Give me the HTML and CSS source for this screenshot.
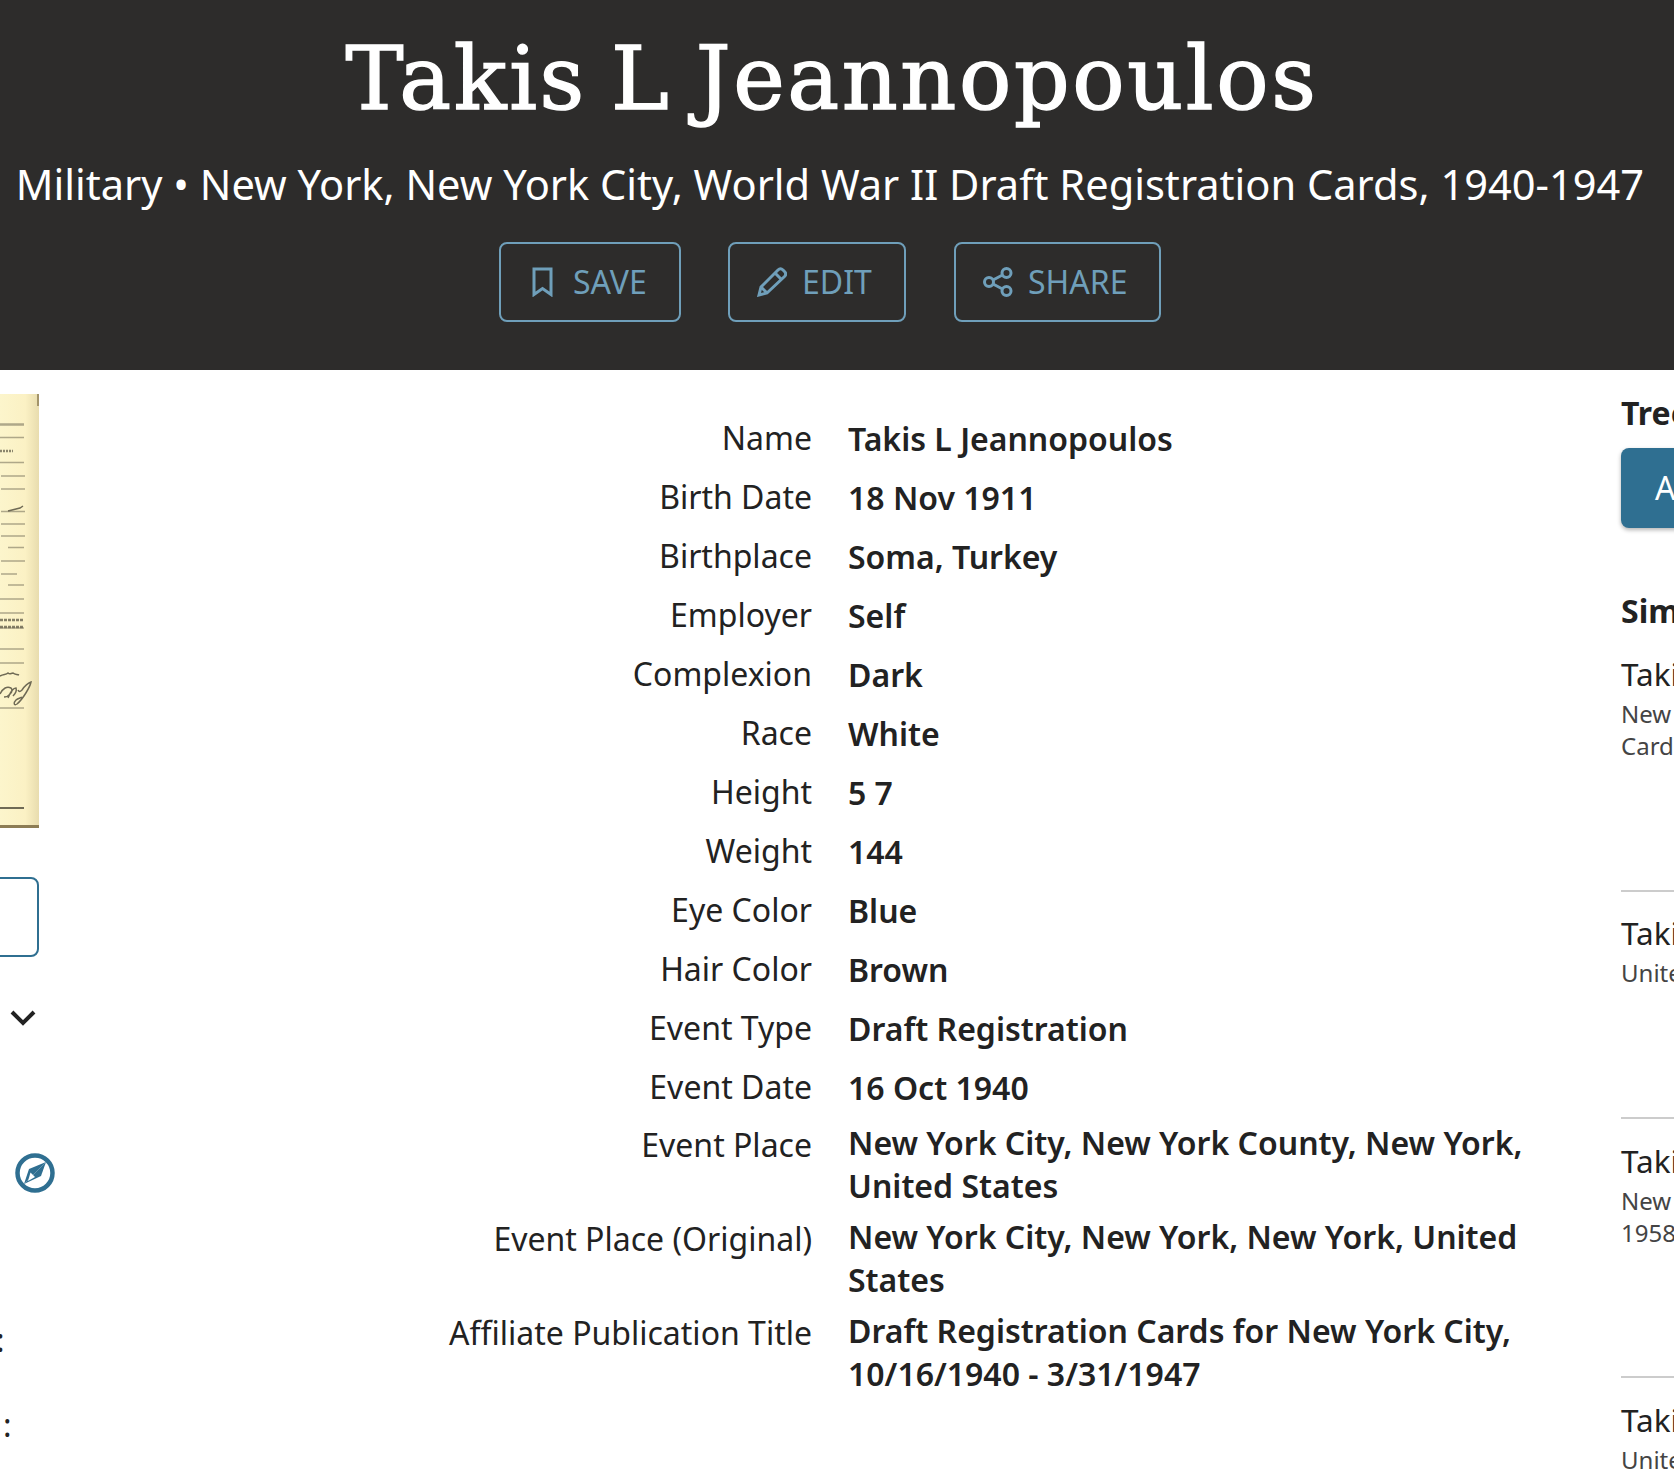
FILE: index.html
```html
<!DOCTYPE html>
<html lang="en">
<head>
<meta charset="utf-8">
<title>Takis L Jeannopoulos</title>
<link rel="stylesheet" href="styles.css">
</head>
<body>
<header class="hero">
  <h1 class="hero-title">Takis L Jeannopoulos</h1>
  <p class="hero-sub">Military • New York, New York City, World War II Draft Registration Cards, 1940-1947</p>
  <div class="hero-actions">
    <a class="ghost-btn save">
      <svg class="ico-save" viewBox="0 0 21 30"><path d="M2 2h17v25.500l-8.500-6-8.500 6z"/></svg>
      <span>SAVE</span>
    </a>
    <a class="ghost-btn edit">
      <svg class="ico-edit" viewBox="0 0 30 30"><path d="M2 28l2-8L21 3c1.500-1.500 3.500-1.500 5 0l1.500 1.500c1.500 1.500 1.500 3.500 0 5L10 26z"/><path d="M4 20l6 6M18 6l6 6"/></svg>
      <span>EDIT</span>
    </a>
    <a class="ghost-btn share">
      <svg class="ico-share" viewBox="0 0 30 30"><circle cx="6" cy="15" r="4.500"/><circle cx="23.500" cy="6" r="4.500"/><circle cx="23.500" cy="24" r="4.500"/><path d="M10 13l9.500-5M10 17l9.500 5"/></svg>
      <span>SHARE</span>
    </a>
  </div>
</header>

<main class="record">
  <div class="media">
    <div class="scan">
      <svg viewBox="0 0 39 434" width="39" height="434">
        <defs>
          <linearGradient id="paper" x1="0" x2="1" y1="0" y2="0">
            <stop offset="0" stop-color="#fcf5cc"/>
            <stop offset="0.65" stop-color="#fbf1c4"/>
            <stop offset="1" stop-color="#e8dcae"/>
          </linearGradient>
        </defs>
        <rect width="39" height="434" fill="url(#paper)"/>
        <rect x="37" width="2" height="12" fill="#a3946a"/>
        <rect y="431" width="39" height="3" fill="#8d7d55"/>
        <g class="scan-lines">
          <path d="M0 30.500h24" stroke-width="2.500" opacity=".55"/>
          <path d="M0 43.500h24M0 68.500h24M1 82h24M1 95h24M1 117.500h24M1 130h24M1 142h24M8 153.500h16M1 167h24M1 180h16M8 191h16M0 205h24M0 219h24M0 234h24M0 255h24M0 269h24M0 314h24" opacity=".55"/>
          <path d="M0 57h13" stroke-dasharray="2 1" stroke-width="2.500" opacity=".8"/>
          <path d="M0 226h24M0 233h24" stroke-dasharray="3 1" stroke-width="2.500" opacity=".85"/>
          <path d="M8 117l12-3 3-2" stroke-width="1.500"/>
          <path d="M0 282c4-2 6-1 8-3 2 2 3 0 5 0 2 2 4 1 6 2M0 300c3-6 7-8 11-6 3 3-2 9-7 9M8 304c2-5 5-10 8-10 1 3-1 6-3 8M18 296c1 2 2 2 4 0 2-3 6-7 9-8-1 5-8 17-14 22-3 2-4-1-1-4 2-2 5-2 6-3" stroke-width="1.500"/>
          <path d="M0 414h24" stroke-width="2"/>
        </g>
      </svg>
    </div>
    <div class="media-btn"></div>
    <svg class="chevron" viewBox="0 0 26 16"><path d="M2 2l11 11L24 2"/></svg>
    <svg class="compass" viewBox="0 0 40 40"><circle cx="20" cy="20" r="17.500"/><path class="needle" d="M31 9L9 31l5-15z"/><path class="needle" d="M31 9L9 31l17-8z"/><path class="needle-hole" d="M15.500 19.500l4.500 4.500-7 4z"/></svg>
    <span class="stub stub-a">:</span>
    <span class="stub stub-b">:</span>
  </div>

  <dl class="facts">
    <dt>Name</dt><dd>Takis L Jeannopoulos</dd>
    <dt>Birth Date</dt><dd>18 Nov 1911</dd>
    <dt>Birthplace</dt><dd>Soma, Turkey</dd>
    <dt>Employer</dt><dd>Self</dd>
    <dt>Complexion</dt><dd>Dark</dd>
    <dt>Race</dt><dd>White</dd>
    <dt>Height</dt><dd>5 7</dd>
    <dt>Weight</dt><dd>144</dd>
    <dt>Eye Color</dt><dd>Blue</dd>
    <dt>Hair Color</dt><dd>Brown</dd>
    <dt>Event Type</dt><dd>Draft Registration</dd>
    <dt>Event Date</dt><dd>16 Oct 1940</dd>
    <dt class="tall">Event Place</dt><dd>New York City, New York County, New York, United States</dd>
    <dt class="tall">Event Place (Original)</dt><dd>New York City, New York, New York, United States</dd>
    <dt class="tall">Affiliate Publication Title</dt><dd>Draft Registration Cards for New York City, 10/16/1940 - 3/31/1947</dd>
  </dl>

  <aside class="side">
    <h2 class="side-head">Tree Person</h2>
    <a class="attach">Attach to Family Tree</a>
    <h2 class="side-head similar">Similar Records</h2>
    <article class="hit first">
      <h3>Takis L Jeannopoulos</h3>
      <p>New York, New York City, World War II Draft Registration</p>
      <p>Cards, 1940-1947</p>
    </article>
    <article class="hit single">
      <h3>Takis Jeannopoulos</h3>
      <p>United States Census</p>
    </article>
    <article class="hit third">
      <h3>Takis Jeannopoulos</h3>
      <p>New York, New York Passenger and Crew Lists, 1909, 1925-</p>
      <p>1958</p>
    </article>
    <article class="hit last">
      <h3>Takis Jeannopoulos</h3>
      <p>United States Census</p>
    </article>
  </aside>
</main>
</body>
</html>
```
FILE: styles.css
```css
* { box-sizing: border-box; }
html, body { margin: 0; height: 1482px; overflow: hidden; background: #fff; }
body { font-family: "Noto Sans", sans-serif; color: #222; }

.hero {
  height: 370px;
  background: #2d2c2b;
  padding: 0 14px 0 0;
  color: #fff;
  text-align: center;
}
.hero-title {
  margin: 0;
  padding: 23px 0 0 4px;
  font-family: "DejaVu Serif", serif;
  font-weight: 400;
  font-size: 87px;
  line-height: 112px;
  letter-spacing: 2.6px;
  word-spacing: -6px;
  -webkit-text-stroke: 1.5px #fff;
}
.hero-sub {
  margin: 0;
  padding-top: 19px;
  font-size: 41.6px;
  line-height: 60px;
  white-space: nowrap;
}
.hero-actions {
  display: flex;
  justify-content: center;
  gap: 48px;
  margin-top: 28px;
}
.ghost-btn {
  display: flex;
  align-items: center;
  justify-content: flex-start;
  height: 80px;
  border: 2px solid #6f9fba;
  border-radius: 8px;
  color: #6f9fba;
  font-size: 32px;
}
.ghost-btn span { margin-bottom: 2px; }
.save { width: 182px; padding-left: 31px; gap: 20px; }
.edit { width: 178px; margin-left: -1px; padding-left: 27px; gap: 15px; }
.share { width: 207px; padding-left: 27px; gap: 15px; }
.ghost-btn svg { fill: none; stroke: #6f9fba; stroke-width: 3; height: 30px; }
.ico-save { width: 21px; }
.ico-edit, .ico-share { width: 30px; }

.record {
  display: flex;
  align-items: flex-start;
}
.media {
  flex: 0 0 39px;
  width: 39px;
  display: flex;
  flex-direction: column;
  align-items: flex-start;
}
.scan { margin-top: 24px; height: 434px; width: 39px; }
.scan svg { display: block; }
.scan-lines { fill: none; stroke: #6f6a55; stroke-width: 1.500; filter: blur(0.5px); }
.media-btn {
  margin: 49px 0 0 -40px;
  width: 79px;
  height: 80px;
  border: 2px solid #2f6f91;
  border-radius: 8px;
}
.chevron {
  margin: 53px 0 0 10px;
  width: 26px;
  height: 16px;
  flex: none;
  fill: none;
  stroke: #222;
  stroke-width: 4;
}
.compass {
  margin: 127px 0 0 15px;
  width: 40px;
  height: 40px;
  flex: none;
  overflow: visible;
}
.compass circle { fill: none; stroke: #2f6f91; stroke-width: 4.500; }
.needle { fill: #2f6f91; }
.needle-hole { fill: #fff; }
.stub { font-size: 32px; line-height: 43px; color: #222; }
.stub-a { margin: 125px 0 0 -4px; }
.stub-b { margin: 42px 0 0 3px; }

.facts {
  flex: none;
  margin: 43px 0 0 0;
  display: grid;
  grid-template-columns: 773px 690px;
  column-gap: 36px;
  row-gap: 8px;
  width: 1582px;
  font-size: 32px;
  line-height: 43px;
}
.facts dt { text-align: right; padding-top: 3px; }
.facts dt.tall { padding-top: 2px; }
.facts dd {
  margin: 0;
  min-height: 51px;
  display: flex;
  align-items: center;
  font-weight: 600;
}

.side { flex: 0 0 400px; width: 400px; margin-top: 21px; }
.side-head { margin: 0; font-size: 32px; line-height: 44px; font-weight: 700; white-space: nowrap; }
.attach {
  display: block;
  margin-top: 13px;
  height: 80px;
  padding-left: 34px;
  border-radius: 8px;
  background: #2f6f91;
  box-shadow: 0 2px 4px rgba(0,0,0,.3);
  color: #fff;
  font-size: 32px;
  line-height: 80px;
  white-space: nowrap;
}
.similar { margin-top: 61px; }
.hit {
  border-bottom: 2px solid #ccc;
  white-space: nowrap;
}
.hit h3 { margin: 0; font-size: 31.5px; line-height: 44px; font-weight: 400; }
.hit p { margin: 0; font-size: 24px; line-height: 32px; color: #444; }
.hit h3 + p { margin-top: 2px; }
.first { margin-top: 19px; height: 240px; }
.single { margin-top: 19px; height: 208px; }
.third { margin-top: 20px; height: 239px; }
.last { margin-top: 20px; border: 0; }
```
